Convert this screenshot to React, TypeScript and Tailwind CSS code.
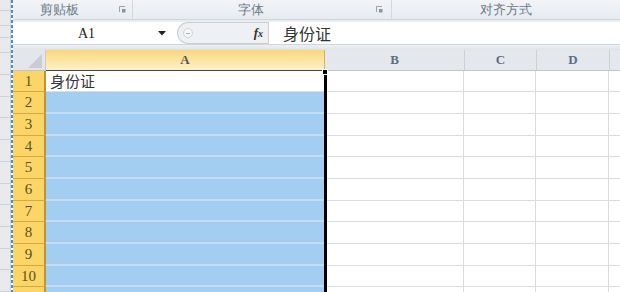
const rows = [1, 2, 3, 4, 5, 6, 7, 8, 9, 10, 11]

const serif = { fontFamily: '"Liberation Serif", "DejaVu Serif", serif' }

function LauncherIcon() {
  return (
    <svg width="7" height="7" viewBox="0 0 7 7" className="shrink-0">
      <path d="M0.5 6V0.5H6" fill="none" stroke="#9aa3ad" strokeWidth="1" />
      <rect x="3" y="3" width="3.5" height="3.5" fill="#8b949e" />
    </svg>
  )
}

function RibbonLabels() {
  return (
    <div className="flex h-[20px] border-b border-[#cfd5dc] bg-gradient-to-b from-[#f2f4f7] to-[#e7ebf0] text-[12.5px] leading-[19px] text-[#6e7a88]">
      <div className="flex w-[120px] items-center border-r border-[#d3d8de] pr-[6px]">
        <span className="ml-[27px] flex-1">剪贴板</span>
        <LauncherIcon />
      </div>
      <div className="flex w-[259px] items-center border-r border-[#d3d8de] pr-[8px]">
        <span className="ml-[105px] flex-1">字体</span>
        <LauncherIcon />
      </div>
      <div className="flex flex-1 items-center">
        <span className="ml-[88px]">对齐方式</span>
      </div>
    </div>
  )
}

function FormulaBar() {
  return (
    <div className="flex h-[30px] flex-col bg-[#e4e7eb]">
      <div className="h-[2px] bg-[#e9ecf0]" />
      <div className="flex h-[22px] bg-white">
        <div className="flex w-[164px] items-center">
          <span className="flex-1 pl-[2px] text-center text-[14px] text-[#222]" style={serif}>
            A1
          </span>
          <svg width="8" height="5" viewBox="0 0 8 5" className="mr-[11px]">
            <path d="M0 0H8L4 4.5Z" fill="#222" />
          </svg>
        </div>
        <div className="flex w-[91px] items-center rounded-l-[11px] border border-r-0 border-[#c9ced4] bg-[#eef0f3]">
          <div className="ml-[5px] flex h-[10px] w-[10px] items-center justify-center rounded-full border border-[#d0d4d9] bg-[#f6f7f8]">
            <div className="h-[1px] w-[4px] bg-[#b0b6bd]" />
          </div>
          <span className="ml-auto mr-[5px] text-[13px] font-bold italic text-[#333]" style={serif}>
            f<span className="text-[10px]">x</span>
          </span>
        </div>
        <div className="flex flex-1 items-center border-l border-[#c9ced4] pl-[14px] text-[16px] text-[#333]" style={{ fontFamily: '"Noto Sans CJK SC", sans-serif' }}>
          身份证
        </div>
      </div>
      <div className="h-[6px] border-t border-[#d2d6dc] bg-gradient-to-b from-[#eef0f3] to-[#dfe3e8]" />
    </div>
  )
}

function HeaderRow() {
  return (
    <div className="flex h-[21px] border-b border-[#bfc5cd] text-[13px] font-bold text-[#5e6e82]" style={serif}>
      <div className="relative w-[33px] border-r border-[#c6cbd2] bg-[#e3e6ea]">
        <svg width="14" height="14" viewBox="0 0 14 14" className="absolute bottom-[2px] right-[3px]">
          <path d="M14 0V14H0Z" fill="#c9cdd3" />
        </svg>
      </div>
      <div className="flex w-[279px] items-center justify-center border-r border-[#d9b35c] bg-gradient-to-b from-[#f9d77a] to-[#fdf1c9] text-[#5b5a4a]">
        A
      </div>
      <div className="flex w-[140px] items-center justify-center border-r border-[#ccd1d7] bg-[#e4e7eb]">B</div>
      <div className="flex w-[72px] items-center justify-center border-r border-[#ccd1d7] bg-[#e4e7eb]">C</div>
      <div className="flex w-[73px] items-center justify-center border-r border-[#ccd1d7] bg-[#e4e7eb]">D</div>
      <div className="flex-1 bg-[#e4e7eb]" />
    </div>
  )
}

function GridRow({ n }: { n: number }) {
  const selected = n > 1
  return (
    <div className="flex h-[21.7px] shrink-0">
      <div
        className="flex w-[33px] items-center justify-center border-r-2 border-b border-r-[#c29335] border-b-[#d9a846] bg-[#fbd565] text-[15px] text-[#5e5027]"
        style={serif}
      >
        {n <= 10 ? n : null}
      </div>
      <div
        className={
          selected
            ? 'w-[278px] border-b-2 border-[#c5dcf1] bg-[#a4cef1]'
            : 'flex w-[278px] items-center border-b border-[#dadcdd] bg-white pl-[4px] text-[15px] text-[#333]'
        }
        style={selected ? undefined : { fontFamily: '"Noto Sans CJK SC", sans-serif' }}
      >
        {n === 1 ? '身份证' : null}
      </div>
      <div className="w-[140px] border-r border-b border-[#dadcdd]" />
      <div className="w-[72px] border-r border-b border-[#dadcdd]" />
      <div className="w-[73px] border-r border-b border-[#dadcdd]" />
      <div className="flex-1 border-b border-[#dadcdd]" />
    </div>
  )
}

export default function App() {
  return (
    <div className="flex h-[292px] w-[620px] overflow-hidden bg-white">
      <div className="flex w-[11px] shrink-0 flex-col border-r border-[#cfd3d8] bg-[#e8eaed]">
        <div className="h-[14px] border-b border-[#cfd3d8]" />
        <div className="h-[20px] border-b border-[#cfd3d8]" />
        <div className="h-[16px] border-b border-[#cfd3d8]" />
        <div className="h-[21px] border-b border-[#cfd3d8]" />
        {rows.map((n) => (
          <div key={n} className="h-[21.7px] shrink-0 border-b border-[#cfd3d8]" />
        ))}
      </div>
      <div className="w-[2px] shrink-0 bg-[repeating-linear-gradient(to_bottom,#3f8ed8_0_3px,transparent_3px_5px)]" />
      <div className="relative flex min-w-0 flex-1 flex-col">
        <RibbonLabels />
        <FormulaBar />
        <HeaderRow />
        {rows.map((n) => (
          <GridRow key={n} n={n} />
        ))}
        {/* selection outline over column A */}
        <div className="pointer-events-none absolute left-[33px] top-[70px] h-[240px] w-[281px] border-t border-r-[3px] border-t-[#444] border-r-black" />
        <div className="pointer-events-none absolute left-[309px] top-[69px] h-[6px] w-[6px] border border-white bg-black" />
      </div>
    </div>
  )
}
